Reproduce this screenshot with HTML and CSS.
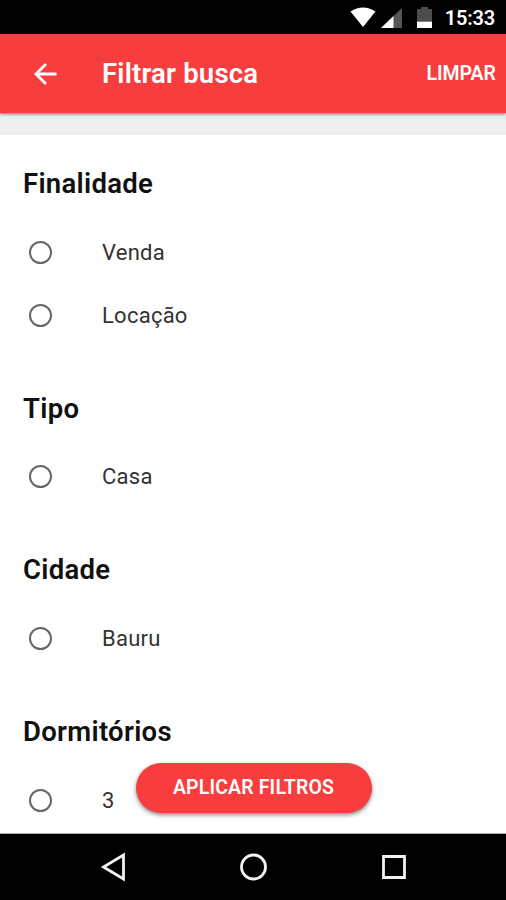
FILE: index.html
```html
<!DOCTYPE html>
<html lang="pt-BR">
<head>
<meta charset="utf-8">
<title>Filtrar busca</title>
<link rel="stylesheet" href="styles.css">
</head>
<body>
<div class="status">
<svg class="wifi" width="26" height="20" viewBox="0 0 26 20"><path d="M0.5 4.6Q13-3.6 25.5 4.6L13 20Z" fill="#fff"/></svg>
<svg class="signal" width="21" height="20" viewBox="0 0 21 20"><path d="M21 0V20H0Z" fill="#555"/><path d="M12.5 8V20H0Z" fill="#fff"/></svg>
<svg class="battery" width="15" height="21" viewBox="0 0 15 21"><path d="M4 0h7v2h4v12H0V2h4z" fill="#4c4c4c"/><path d="M0 14.5h15v6.5H0z" fill="#fff"/></svg>
<span class="clock">15:33</span>
</div>
<header class="bar">
<svg class="back" width="24" height="24" viewBox="0 0 24 24" fill="none" stroke="#fff" stroke-width="2.8"><path d="M23.5 12H3M13 2L3 12L13 22"/></svg>
<h1>Filtrar busca</h1>
<button class="clear">LIMPAR</button>
</header>
<main>
<section><h2>Finalidade</h2><label><i></i><span>Venda</span></label><label><i></i><span>Locação</span></label></section>
<section><h2>Tipo</h2><label><i></i><span>Casa</span></label></section>
<section><h2>Cidade</h2><label><i></i><span>Bauru</span></label></section>
<section><h2>Dormitórios</h2><label><i></i><span>3</span></label></section>
</main>
<button class="apply">APLICAR FILTROS</button>
<nav>
<svg width="26" height="30" viewBox="0 0 26 30"><path d="M23.5 3V27L3.5 15Z"/></svg>
<svg width="28" height="28" viewBox="0 0 28 28"><circle cx="13.5" cy="14" r="12"/></svg>
<svg width="26" height="26" viewBox="0 0 26 26"><path d="M2.5 2.5H23.5V23.5H2.5Z"/></svg>
</nav>
</body>
</html>
```
FILE: styles.css
```css
*{box-sizing:border-box}
body{margin:0;width:506px;height:900px;overflow:hidden;display:flex;flex-direction:column;position:relative;font-family:Roboto,sans-serif;background:#fff;color:#111}
button{border:0;background:none;font:600 19.5px Roboto,sans-serif;color:#fff;padding:0;white-space:nowrap}
.status{height:34px;flex:none;background:#000;display:flex;align-items:center;justify-content:flex-end;padding-right:11px}
.signal{margin-left:5px;margin-top:2px}
.battery{margin:0 13px 0 15px}
.clock{color:#fff;font-size:20px;font-weight:600;letter-spacing:-.2px;margin-top:2px}
.bar{height:79px;flex:none;background:#f83d3e;display:flex;align-items:center;padding:0 10px 0 33px;box-shadow:0 1px 3px #0008;z-index:1}
.clear{padding-bottom:1px}
h1{margin:0 auto 0 45px;font-size:27.5px;font-weight:600;letter-spacing:.2px;color:#fff}
main{flex:1;min-height:0;overflow:hidden;border-top:22px solid #eee;padding:17px 24px 0 23px}
section{margin-bottom:30.2px}
h2{margin:0 0 4.5px;height:64px;line-height:64px;font-size:27.5px;font-weight:600;letter-spacing:.3px}
label{display:flex;align-items:center;height:63px}
label i{width:23px;height:23px;border:2.5px solid #666;border-radius:50%;margin:0 50.5px 0 5.5px}
label span{font-size:22px;letter-spacing:.25px;color:#333}
.apply{position:absolute;left:136px;top:763px;width:236px;height:50px;padding:0 1px 2px 0;border-radius:25px;background:#f83d3e;box-shadow:0 2px 4px #0007;letter-spacing:.15px}
nav{height:66px;flex:none;background:#000;display:flex;align-items:center;justify-content:space-between;padding:0 99px 0 100px;box-shadow:0 -1px #aaa}
nav svg{fill:none;stroke:#f2f2f2;stroke-width:2.8}
```
